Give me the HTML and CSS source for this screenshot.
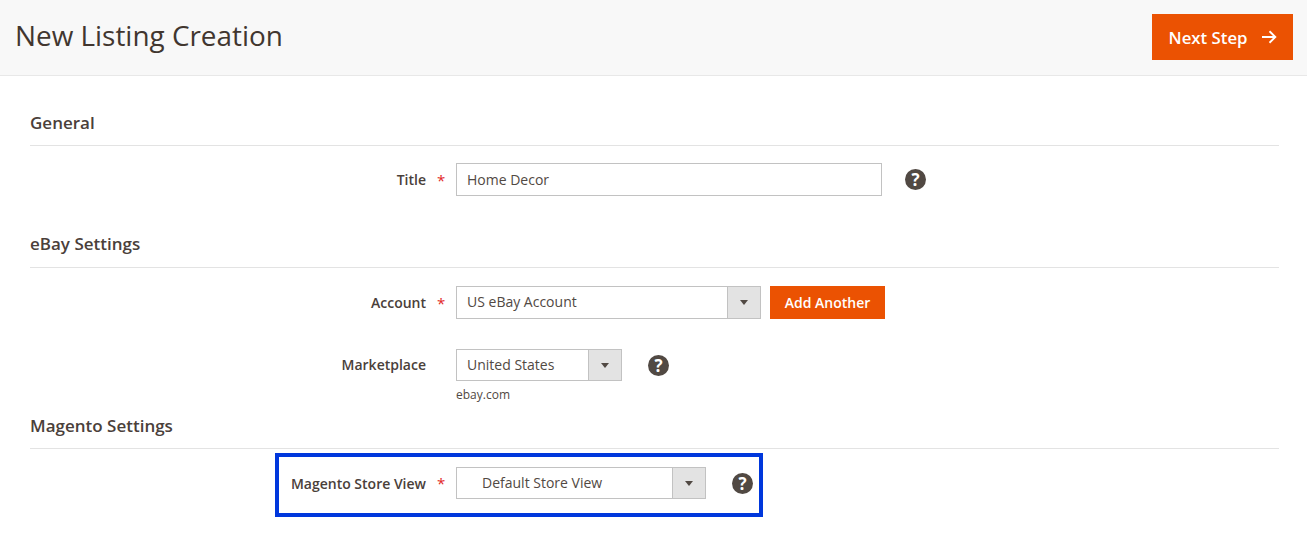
FILE: index.html
```html
<!DOCTYPE html>
<html lang="en">
<head>
<meta charset="utf-8">
<title>New Listing Creation</title>
<link rel="stylesheet" href="styles.css">
</head>
<body>
<header class="page-head">
  <h1 class="page-title">New Listing Creation</h1>
  <button class="btn btn-next" type="button">
    <span>Next Step</span>
    <svg class="next-arrow" width="16" height="14" viewBox="0 0 16 14" aria-hidden="true"><path d="M1 7h13M8.500 1.300 14.300 7l-5.800 5.700" fill="none" stroke="#fff" stroke-width="1.900"/></svg>
  </button>
</header>
<main class="content">
  <section class="section section-general">
    <h2 class="section-title">General</h2>
    <div class="row">
      <div class="label">Title</div>
      <div class="star">*</div>
      <div class="input w-title">Home Decor</div>
      <span class="help help-title">?</span>
    </div>
  </section>
  <section class="section section-ebay">
    <h2 class="section-title">eBay Settings</h2>
    <div class="row">
      <div class="label">Account</div>
      <div class="star">*</div>
      <div class="select w-account">
        <div class="select-value">US eBay Account</div>
        <div class="select-arrow"></div>
      </div>
      <button class="btn btn-add" type="button">Add Another</button>
    </div>
    <div class="row row-market">
      <div class="label">Marketplace</div>
      <div class="star"></div>
      <div class="field-stack">
        <div class="select select-short w-market">
          <div class="select-value">United States</div>
          <div class="select-arrow"></div>
        </div>
        <div class="note">ebay.com</div>
      </div>
      <span class="help help-market">?</span>
    </div>
  </section>
  <section class="section section-magento">
    <h2 class="section-title">Magento Settings</h2>
    <div class="row row-store">
      <div class="highlight"></div>
      <div class="label">Magento Store View</div>
      <div class="star">*</div>
      <div class="select select-short w-store">
        <div class="select-value indented">Default Store View</div>
        <div class="select-arrow"></div>
      </div>
      <span class="help help-store">?</span>
    </div>
  </section>
</main>
</body>
</html>
```
FILE: styles.css
```css
* { box-sizing: border-box; }
html, body { margin: 0; padding: 0; }
body {
  width: 1307px;
  height: 560px;
  overflow: hidden;
  background: #fff;
  color: #41362f;
  font-family: "Open Sans", "Noto Sans", sans-serif;
}
.page-head {
  height: 76px;
  background: #f8f8f8;
  border-bottom: 1px solid #e8e8e8;
  display: flex;
  align-items: flex-start;
  justify-content: space-between;
  padding: 14px 14px 0 15px;
}
.page-title {
  margin: 2px 0 0;
  font-size: 27.900px;
  line-height: 38px;
  font-weight: 400;
  color: #41362f;
}
.btn {
  border: 0;
  background: #eb5202;
  color: #fff;
  font-family: inherit;
  font-weight: 600;
  padding: 0;
  display: flex;
  align-items: center;
  justify-content: center;
}
.btn-next {
  width: 141px;
  height: 46px;
  font-size: 16.800px;
  gap: 13px;
}
.next-arrow { display: block; }
.btn-add {
  width: 115px;
  height: 33px;
  margin-left: 9px;
  font-size: 14px;
}
.content { padding: 0 28px 0 30px; }
.section-title {
  margin: 0;
  font-size: 17px;
  line-height: 22px;
  font-weight: 600;
  color: #4a403a;
  border-bottom: 1px solid #e3e3e3;
}
.section-general .section-title { height: 34px; }
.section-ebay .section-title { height: 35px; }
.section-magento .section-title { height: 34px; }
.section-general { padding-top: 36px; }
.section-ebay { padding-top: 37px; }
.section-magento { padding-top: 12px; }
.section-general .row { margin-top: 17px; }
.section-ebay .row { margin-top: 18px; }
.section-ebay .row-market { margin-top: 30px; align-items: flex-start; }
.section-magento .row { margin-top: 18px; }
.row {
  position: relative;
  display: flex;
  align-items: center;
}
.label {
  width: 396px;
  text-align: right;
  font-size: 14px;
  font-weight: 600;
  color: #4a403a;
}
.row-market .label, .row-market .help { margin-top: 6px; }
.star {
  width: 30px;
  padding-left: 11px;
  font-size: 15px;
  line-height: 18px;
  color: #e22626;
}
.input, .select-value {
  font-size: 14px;
  color: #514943;
  padding-left: 10px;
}
.input {
  height: 33px;
  line-height: 31px;
  border: 1px solid #c2c2c2;
  background: #fff;
}
.select {
  height: 33px;
  display: flex;
  border: 1px solid #c2c2c2;
  background: #fff;
}
.select-short { height: 32px; }
.select-value {
  flex: 1;
  line-height: 30px;
  border-right: 1px solid #c2c2c2;
}
.select .indented { padding-left: 25px; }
.select-arrow {
  width: 32px;
  background: #e3e3e3;
  display: flex;
  align-items: center;
  justify-content: center;
}
.select-arrow::before {
  content: "";
  border-style: solid;
  border-width: 5px 4.500px 0;
  border-color: #514943 transparent transparent;
}
.w-title { width: 426px; }
.w-account { width: 305px; }
.w-market { width: 166px; }
.w-store { width: 250px; }
.note {
  margin-top: 5px;
  font-size: 12px;
  line-height: 17px;
  color: #514943;
}
.help {
  width: 21px;
  height: 21px;
  border-radius: 50%;
  background: #514943;
  color: #fff;
  font-size: 17px;
  font-weight: 700;
  line-height: 21px;
  text-align: center;
}
.help-title { margin-left: 23px; }
.help-market { margin-left: 26px; }
.help-store { margin-left: 26px; }
.highlight {
  position: absolute;
  left: 245px;
  top: -14px;
  width: 488px;
  height: 64px;
  border: 4px solid #0037dc;
}
```
